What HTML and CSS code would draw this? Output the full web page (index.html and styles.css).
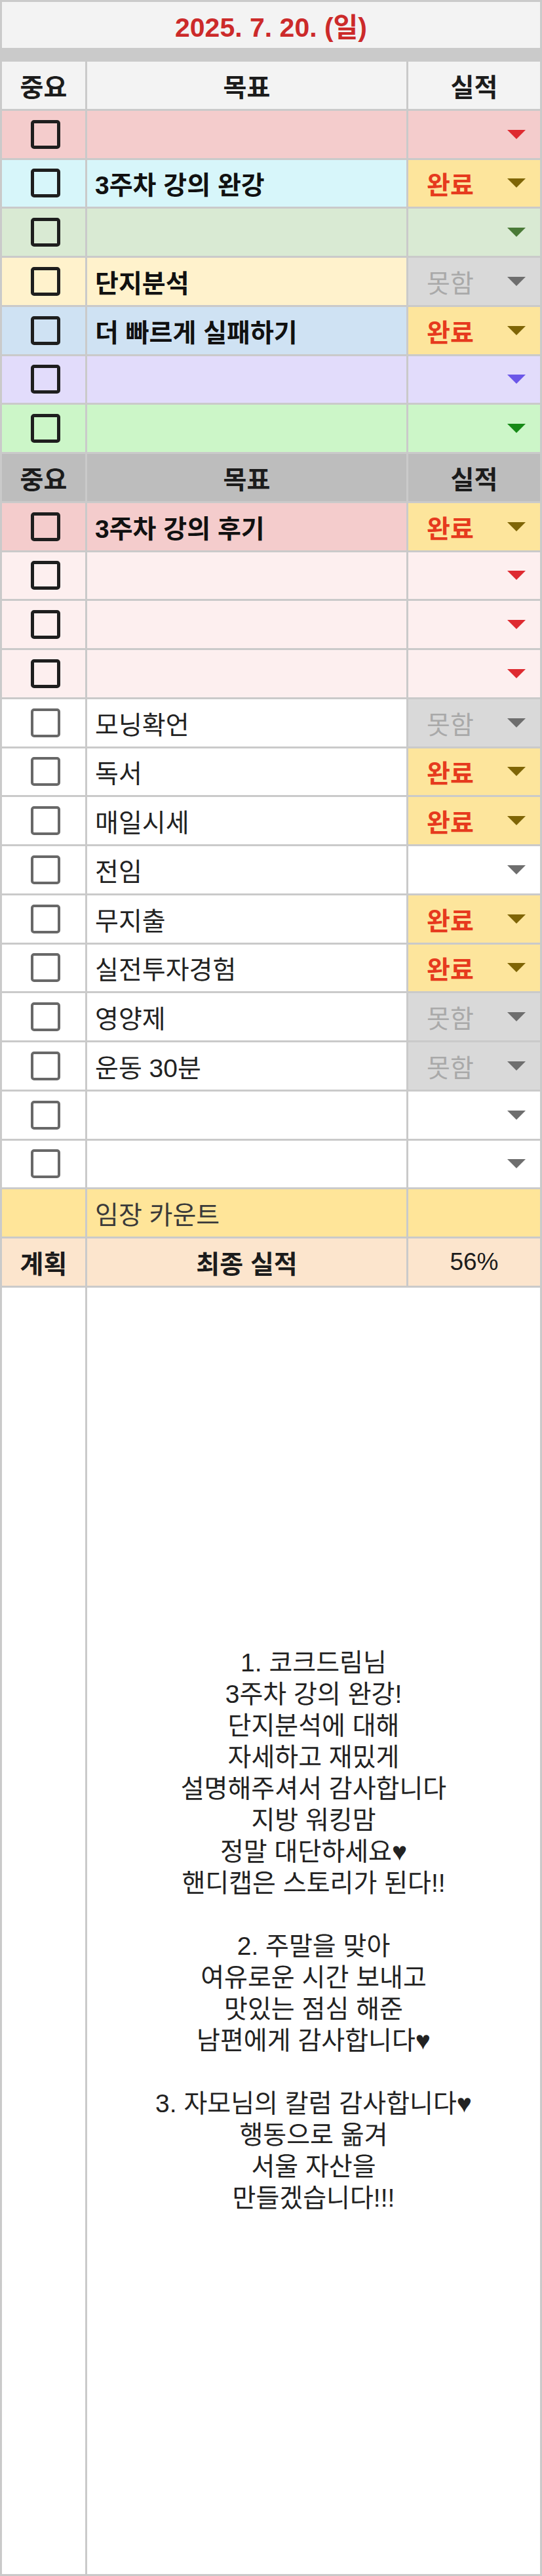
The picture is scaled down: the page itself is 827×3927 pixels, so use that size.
FILE: index.html
```html
<!DOCTYPE html>
<html lang="ko">
<head>
<meta charset="UTF-8">
<meta name="viewport" content="width=device-width, initial-scale=1.0">
<title>2025. 7. 20. 목표 실적</title>
<link rel="stylesheet" href="styles.css">
</head>
<body>
<div class="sheet">
    <div class="date-cell">2025. 7. 20. (일)</div>
    <div class="band"></div>

    <!-- section 1 -->
    <div class="row head light">
        <div class="cell center">중요</div>
        <div class="cell center">목표</div>
        <div class="cell center">실적</div>
    </div>
    <div class="row pink">
        <div class="cell check"><span class="box"></span></div>
        <div class="cell goal"></div>
        <div class="cell result"><span class="arrow red"></span></div>
    </div>
    <div class="row cyan">
        <div class="cell check"><span class="box"></span></div>
        <div class="cell goal strong">3주차 강의 완강</div>
        <div class="cell result done">완료<span class="arrow olive"></span></div>
    </div>
    <div class="row sage">
        <div class="cell check"><span class="box"></span></div>
        <div class="cell goal"></div>
        <div class="cell result"><span class="arrow moss"></span></div>
    </div>
    <div class="row cream">
        <div class="cell check"><span class="box"></span></div>
        <div class="cell goal strong">단지분석</div>
        <div class="cell result miss">못함<span class="arrow grey"></span></div>
    </div>
    <div class="row sky">
        <div class="cell check"><span class="box"></span></div>
        <div class="cell goal strong">더 빠르게 실패하기</div>
        <div class="cell result done">완료<span class="arrow olive"></span></div>
    </div>
    <div class="row lilac">
        <div class="cell check"><span class="box"></span></div>
        <div class="cell goal"></div>
        <div class="cell result"><span class="arrow violet"></span></div>
    </div>
    <div class="row mint">
        <div class="cell check"><span class="box"></span></div>
        <div class="cell goal"></div>
        <div class="cell result"><span class="arrow green"></span></div>
    </div>

    <!-- section 2 -->
    <div class="row head dark">
        <div class="cell center">중요</div>
        <div class="cell center">목표</div>
        <div class="cell center">실적</div>
    </div>
    <div class="row pink">
        <div class="cell check"><span class="box"></span></div>
        <div class="cell goal strong">3주차 강의 후기</div>
        <div class="cell result done">완료<span class="arrow olive"></span></div>
    </div>
    <div class="row blush">
        <div class="cell check"><span class="box"></span></div>
        <div class="cell goal"></div>
        <div class="cell result"><span class="arrow red"></span></div>
    </div>
    <div class="row blush">
        <div class="cell check"><span class="box"></span></div>
        <div class="cell goal"></div>
        <div class="cell result"><span class="arrow red"></span></div>
    </div>
    <div class="row blush">
        <div class="cell check"><span class="box"></span></div>
        <div class="cell goal"></div>
        <div class="cell result"><span class="arrow red"></span></div>
    </div>

    <!-- daily habits -->
    <div class="row plain">
        <div class="cell check"><span class="box soft"></span></div>
        <div class="cell goal">모닝확언</div>
        <div class="cell result miss">못함<span class="arrow grey"></span></div>
    </div>
    <div class="row plain">
        <div class="cell check"><span class="box soft"></span></div>
        <div class="cell goal">독서</div>
        <div class="cell result done">완료<span class="arrow olive"></span></div>
    </div>
    <div class="row plain">
        <div class="cell check"><span class="box soft"></span></div>
        <div class="cell goal">매일시세</div>
        <div class="cell result done">완료<span class="arrow olive"></span></div>
    </div>
    <div class="row plain">
        <div class="cell check"><span class="box soft"></span></div>
        <div class="cell goal">전임</div>
        <div class="cell result"><span class="arrow grey"></span></div>
    </div>
    <div class="row plain">
        <div class="cell check"><span class="box soft"></span></div>
        <div class="cell goal">무지출</div>
        <div class="cell result done">완료<span class="arrow olive"></span></div>
    </div>
    <div class="row plain">
        <div class="cell check"><span class="box soft"></span></div>
        <div class="cell goal">실전투자경험</div>
        <div class="cell result done">완료<span class="arrow olive"></span></div>
    </div>
    <div class="row plain">
        <div class="cell check"><span class="box soft"></span></div>
        <div class="cell goal">영양제</div>
        <div class="cell result miss">못함<span class="arrow grey"></span></div>
    </div>
    <div class="row plain">
        <div class="cell check"><span class="box soft"></span></div>
        <div class="cell goal">운동 30분</div>
        <div class="cell result miss">못함<span class="arrow grey"></span></div>
    </div>
    <div class="row plain">
        <div class="cell check"><span class="box soft"></span></div>
        <div class="cell goal"></div>
        <div class="cell result"><span class="arrow grey"></span></div>
    </div>
    <div class="row plain">
        <div class="cell check"><span class="box soft"></span></div>
        <div class="cell goal"></div>
        <div class="cell result"><span class="arrow grey"></span></div>
    </div>

    <div class="row butter">
        <div class="cell"></div>
        <div class="cell goal muted">임장 카운트</div>
        <div class="cell"></div>
    </div>
    <div class="row peach">
        <div class="cell center">계획</div>
        <div class="cell center">최종 실적</div>
        <div class="cell center normal">56%</div>
    </div>

    <div class="row note">
        <div class="cell"></div>
        <div class="cell memo">
            <p>1. 코크드림님<br>3주차 강의 완강!<br>단지분석에 대해<br>자세하고 재밌게<br>설명해주셔서 감사합니다<br>지방 워킹맘<br>정말 대단하세요♥<br>핸디캡은 스토리가 된다!!</p>
            <p>2. 주말을 맞아<br>여유로운 시간 보내고<br>맛있는 점심 해준<br>남편에게 감사합니다♥</p>
            <p>3. 자모님의 칼럼 감사합니다♥<br>행동으로 옮겨<br>서울 자산을<br>만들겠습니다!!!</p>
        </div>
    </div>
</div>
</body>
</html>
```

FILE: styles.css
```css
body {
    margin: 0;
    font-family: 'Liberation Sans', 'Noto Sans CJK KR', sans-serif;
    color: #1c1c1c;
    background-color: #fff;
}
.sheet {
    width: 827px;
    height: 3927px;
    box-sizing: border-box;
    padding: 3px;
    background-color: #cacaca;
    display: flex;
    flex-direction: column;
    gap: 3px;
}
.date-cell {
    height: 70px;
    flex: none;
    background-color: #f3f3f3;
    color: #cc2a2a;
    font-size: 41px;
    font-weight: 700;
    display: flex;
    align-items: center;
    justify-content: center;
}
.band {
    height: 15px;
    flex: none;
}
.row {
    --bg: #fff;
    height: 71.75px;
    flex: none;
    display: grid;
    grid-template-columns: 127px 487px 1fr;
    gap: 3px;
}
.cell {
    background-color: var(--bg);
    display: flex;
    align-items: center;
    font-size: 39px;
    min-width: 0;
    white-space: nowrap;
}
.center {
    justify-content: center;
    font-weight: 700;
}
.normal {
    font-weight: 400;
    font-size: 37px;
}

/* row colours */
.light { --bg: #f3f3f3; }
.dark { --bg: #bdbdbd; }
.pink { --bg: #f4cccc; }
.cyan { --bg: #d7f6fa; }
.sage { --bg: #d9ead3; }
.cream { --bg: #fff2cc; }
.sky { --bg: #cfe2f3; }
.lilac { --bg: #e2dcfb; }
.mint { --bg: #ccf6c8; }
.blush { --bg: #fdefef; }
.plain { --bg: #fff; }
.butter { --bg: #ffe599; }
.peach { --bg: #fce5cd; }

/* checkbox column */
.check {
    justify-content: center;
    padding-left: 6px;
}
.box {
    width: 35px;
    height: 34px;
    border: 5px solid #1e1e1e;
    border-radius: 5px;
}
.box.soft {
    border: 4px solid #686868;
    width: 37px;
    height: 36px;
}

/* goal column */
.goal {
    padding-left: 12px;
    color: #222;
}
.strong {
    font-weight: 700;
    color: #111;
}
.muted {
    color: #3a3a3a;
}

/* result dropdown column */
.result {
    padding: 0 22px 0 28px;
}
.result.done {
    background-color: #fde59c;
    color: #e63a1e;
    font-weight: 700;
}
.result.miss {
    background-color: #d9d9d9;
    color: #a9a9a9;
}
.arrow {
    margin-left: auto;
    width: 0;
    height: 0;
    border-left: 14px solid transparent;
    border-right: 14px solid transparent;
    border-top: 14px solid #777;
}
.arrow.red { border-top-color: #de2a30; }
.arrow.olive { border-top-color: #7f6506; }
.arrow.moss { border-top-color: #4a7a37; }
.arrow.grey { border-top-color: #6e6e6e; }
.arrow.violet { border-top-color: #6b57e8; }
.arrow.green { border-top-color: #178a17; }

/* gratitude note */
.note {
    flex: 1;
    height: auto;
}
.memo {
    grid-column: 2 / 4;
    flex-direction: column;
    justify-content: center;
    text-align: center;
    line-height: 48px;
    color: #222;
}
.memo p {
    margin: 0 0 48px;
}
.memo p:last-child {
    margin-bottom: 0;
}
```
